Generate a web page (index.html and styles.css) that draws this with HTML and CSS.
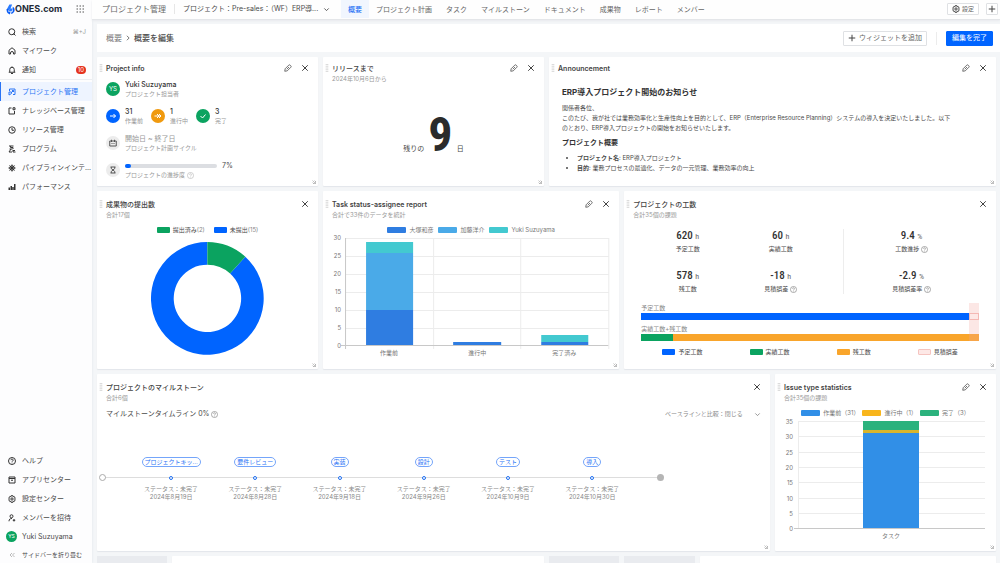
FILE: index.html
```html
<!DOCTYPE html>
<html lang="ja">
<head>
<meta charset="utf-8">
<title>プロジェクト管理 - 概要を編集</title>
<link rel="stylesheet" href="styles.css">
</head>
<body>
<svg class="sprite" aria-hidden="true">
  <symbol id="i-edit" viewBox="0 0 16 16"><path d="M1.500 14.500l.8-5L9.500 2.300a2 2 0 0 1 2.800 0l1.400 1.400a2 2 0 0 1 0 2.800L6.500 13.700zM5.500 10.500l4.500-4.500"/></symbol>
  <symbol id="i-close" viewBox="0 0 16 16"><path d="M2.500 2.500l11 11M13.500 2.500l-11 11"/></symbol>
  <symbol id="i-drag" viewBox="0 0 6 14"><path d="M1 1h1M4 1h1M1 4h1M4 4h1M1 7h1M4 7h1M1 10h1M4 10h1M1 13h1M4 13h1"/></symbol>
  <symbol id="i-resize" viewBox="0 0 8 8"><path d="M1 1l6 6M7 2v5H2M5 1l2 2M1 5l2 2"/></symbol>
  <symbol id="i-help" viewBox="0 0 16 16"><circle cx="8" cy="8" r="7"/><path d="M5.800 6.300a2.200 2.200 0 1 1 3.200 2c-.7.400-1 .8-1 1.500M8 11.300v1.200"/></symbol>
  <symbol id="i-down" viewBox="0 0 16 16"><path d="M3 5.500l5 5 5-5"/></symbol>
  <symbol id="i-plus" viewBox="0 0 16 16"><path d="M8 1.500v13M1.500 8h13"/></symbol>
  <symbol id="i-gear" viewBox="0 0 16 16"><path d="M6 1.500h4l.5 1.900 1.900-.5 2 3.400L13 8l1.400 1.700-2 3.400-1.900-.5-.5 1.900H6l-.5-1.900-1.900.5-2-3.400L3 8 1.600 6.300l2-3.400 1.900.5z"/><circle cx="8" cy="8" r="2.300"/></symbol>
</svg>
<div class="app">
  <aside class="sidebar">
    <div class="brand">
      <svg class="brand-mark" viewBox="0 0 16 20"><path d="M6 1h5L8 8h4l-2 5H5l1-3H1z" fill="#2a7bff"/><path d="M1 9h4l-1 5h4l-1 5C3 18 0 14 1 9zM12 5c4 2 5 8 1 11-1 1-2 2-4 2l1-4h2z" fill="#0a5cf5"/></svg>
      <span class="brand-name">ONES.com</span>
      <button class="apps" aria-label="アプリ一覧"><svg class="ico" viewBox="0 0 16 16"><path class="dots" d="M1 2h3M7 2h3M13 2h3M1 8h3M7 8h3M13 8h3M1 14h3M7 14h3M13 14h3"/></svg></button>
    </div>
    <nav class="menu">
      <a href="#" class="item"><svg class="ico" viewBox="0 0 16 16"><circle cx="7.500" cy="7.500" r="6"/><path d="M11 11l4 4"/></svg><span>検索</span><kbd>⌘+J</kbd></a>
      <a href="#" class="item"><svg class="ico" viewBox="0 0 16 16"><path d="M2 14V6.500L8 1.500l6 5V14h-3v-2a3 3 0 0 0-6 0v2z"/></svg><span>マイワーク</span></a>
      <a href="#" class="item"><svg class="ico" viewBox="0 0 16 16"><path d="M1.500 12.500h13M3.500 12V7a4.500 4.500 0 0 1 9 0v5M6 15h4M8 2.500V1"/></svg><span>通知</span><b class="badge">10</b></a>
    </nav>
    <nav class="menu menu-main">
      <a href="#" class="item active"><svg class="ico" viewBox="0 0 16 16"><path d="M3 6V2h11v11h-4M2 8h5v3l-5 3zM7 9l4-4M8 5h3v3"/></svg><span>プロジェクト管理</span></a>
      <a href="#" class="item"><svg class="ico" viewBox="0 0 16 16"><path d="M7 2H2v12h11V8M10 1.500h4v4h-4z"/></svg><span>ナレッジベース管理</span></a>
      <a href="#" class="item"><svg class="ico" viewBox="0 0 16 16"><circle cx="8" cy="8" r="6.500"/><path d="M8 4v4.500h4"/></svg><span>リソース管理</span></a>
      <a href="#" class="item"><svg class="ico" viewBox="0 0 16 16"><path d="M2 2h9M5 2v3h5v3M3 8h6M6 8l-4 6h6M10 10v4h5M10 11h4"/></svg><span>プログラム</span></a>
      <a href="#" class="item"><svg class="ico" viewBox="0 0 16 16"><circle cx="8" cy="8" r="4.500"/><circle cx="8" cy="8" r="1"/><path d="M8 1v14M1 8h14M3 3l10 10M13 3L3 13"/></svg><span>パイプラインインテ...</span></a>
      <a href="#" class="item"><svg class="ico" viewBox="0 0 16 16"><path class="bars" d="M2.500 14V9M6.500 14V6M10 14V8M13.500 14V2"/></svg><span>パフォーマンス</span></a>
    </nav>
    <nav class="menu menu-foot">
      <a href="#" class="item"><svg class="ico"><use href="#i-help"/></svg><span>ヘルプ</span></a>
      <a href="#" class="item"><svg class="ico" viewBox="0 0 16 16"><path d="M2 2h12v12H2zM2 5h12M6 8l2 1 2-1"/></svg><span>アプリセンター</span></a>
      <a href="#" class="item"><svg class="ico"><use href="#i-gear"/></svg><span>設定センター</span></a>
      <a href="#" class="item"><svg class="ico" viewBox="0 0 16 16"><circle cx="7" cy="4.500" r="3"/><path d="M2 14.500c0-4 2-5.500 6-5.500M12 10v5M9.500 12.500h5"/></svg><span>メンバーを招待</span></a>
      <a href="#" class="item"><i class="avatar small">YS</i><span>Yuki Suzuyama</span></a>
      <button class="item fold"><svg class="ico thin" viewBox="0 0 16 16"><path d="M8 4L4 8l4 4M13 4L9 8l4 4"/></svg><span>サイドバーを折り畳む</span></button>
    </nav>
  </aside>

  <div class="main">
    <header class="topbar">
      <span class="product">プロジェクト管理</span>
      <label class="picker project"><select aria-label="プロジェクト"><option>プロジェクト：Pre-sales：（WF）ERP導...</option></select><svg class="ico"><use href="#i-down"/></svg></label>
      <nav class="tabs">
        <a href="#" class="tab current">概要</a><a href="#" class="tab">プロジェクト計画</a><a href="#" class="tab">タスク</a><a href="#" class="tab">マイルストーン</a><a href="#" class="tab">ドキュメント</a><a href="#" class="tab">成果物</a><a href="#" class="tab">レポート</a><a href="#" class="tab">メンバー</a>
      </nav>
      <button class="btn compact"><svg class="ico"><use href="#i-gear"/></svg>設定</button>
      <button class="btn compact square" aria-label="追加"><svg class="ico"><use href="#i-plus"/></svg></button>
    </header>

    <div class="subbar">
      <a href="#" class="crumb">概要</a>
      <svg class="crumb-sep" viewBox="0 0 8 8"><path d="M2.500 1l3 3-3 3"/></svg>
      <h1>概要を編集</h1>
      <button class="btn"><svg class="ico"><use href="#i-plus"/></svg>ウィジェットを追加</button>
      <span class="divider"></span>
      <button class="btn primary">編集を完了</button>
    </div>

    <main class="board">
      <section class="card c3 tight">
        <header class="head"><svg class="drag"><use href="#i-drag"/></svg><h2 lang="en">Project info</h2><button aria-label="編集"><svg class="ico pen"><use href="#i-edit"/></svg></button><button aria-label="閉じる"><svg class="ico"><use href="#i-close"/></svg></button></header>
        <div class="info">
          <div class="pair"><i class="avatar">YS</i><div><p class="strong">Yuki Suzuyama</p><p class="note">プロジェクト担当者</p></div></div>
          <div class="stats">
            <div class="pair"><i class="disc blue"><svg class="ico" viewBox="0 0 16 16"><path d="M2 8h11M9 4l4 4-4 4"/></svg></i><div><p class="strong">31</p><p class="note">作業前</p></div></div>
            <div class="pair"><i class="disc orange"><svg class="ico" viewBox="0 0 16 16"><path d="M1 8h13M6 4l4 4-4 4M10 4l4 4-4 4"/></svg></i><div><p class="strong">1</p><p class="note">進行中</p></div></div>
            <div class="pair"><i class="disc green"><svg class="ico" viewBox="0 0 16 16"><path d="M3 8l4 4 6-7"/></svg></i><div><p class="strong">3</p><p class="note">完了</p></div></div>
          </div>
          <div class="pair"><i class="disc gray"><svg class="ico" viewBox="0 0 16 16"><path d="M1.500 4h13v10h-13zM5 1.500V6M11 1.500V6M5 9h2M9 9h2"/></svg></i><div><p class="faded">開始日 ~ 終了日</p><p class="note">プロジェクト計画サイクル</p></div></div>
          <div class="pair"><i class="disc gray"><svg class="ico" viewBox="0 0 16 16"><path d="M3 2h10M3 14h10M4.500 2v3L8 8l3.500-3V2M4.500 14v-3L8 8l3.500 3v3"/></svg></i><div><p class="meter"><progress value="7" max="100" aria-label="プロジェクトの進捗度"></progress><span>7%</span></p><p class="note">プロジェクトの進捗度 <svg class="q"><use href="#i-help"/></svg></p></div></div>
        </div>
        <svg class="resize"><use href="#i-resize"/></svg>
      </section>

      <section class="card c3 tight">
        <header class="head"><svg class="drag"><use href="#i-drag"/></svg><h2>リリースまで<small>2024年10月6日から</small></h2><button aria-label="編集"><svg class="ico pen"><use href="#i-edit"/></svg></button><button aria-label="閉じる"><svg class="ico"><use href="#i-close"/></svg></button></header>
        <p class="countdown">残りの<b>9</b>日</p>
        <svg class="resize"><use href="#i-resize"/></svg>
      </section>

      <section class="card c6 tight">
        <header class="head"><svg class="drag"><use href="#i-drag"/></svg><h2 lang="en">Announcement</h2><button aria-label="編集"><svg class="ico pen"><use href="#i-edit"/></svg></button><button aria-label="閉じる"><svg class="ico"><use href="#i-close"/></svg></button></header>
        <div class="article">
          <h3>ERP導入プロジェクト開始のお知らせ</h3>
          <p>関係者各位、<br>このたび、我が社では業務効率化と生産性向上を目的として、ERP（Enterprise Resource Planning）システムの導入を決定いたしました。以下<br>のとおり、ERP導入プロジェクトの開始をお知らせいたします。</p>
          <h4>プロジェクト概要</h4>
          <ul><li><b>プロジェクト名</b>: ERP導入プロジェクト</li><li><b>目的</b>: 業務プロセスの最適化、データの一元管理、業務効率の向上</li></ul>
        </div>
        <svg class="resize"><use href="#i-resize"/></svg>
      </section>

      <section class="card c3">
        <header class="head"><svg class="drag"><use href="#i-drag"/></svg><h2>成果物の提出数<small>合計17個</small></h2><button aria-label="閉じる"><svg class="ico"><use href="#i-close"/></svg></button></header>
        <ul class="legend wide"><li><i class="sw green"></i><span>提出済み<em>(2)</em></span></li><li><i class="sw blue"></i><span>未提出<em>(15)</em></span></li></ul>
        <svg class="donut" viewBox="0 0 112 112" role="img" aria-label="提出済み2、未提出15">
          <path fill="#0064ff" d="M93.700 14.600A56 56 0 1 1 56 0V22.500A33.500 33.500 0 1 0 78.600 31.200z"/>
          <path fill="#0ba360" d="M56 0A56 56 0 0 1 93.700 14.600L78.600 31.200A33.500 33.500 0 0 0 56 22.500z"/>
        </svg>
        <svg class="resize"><use href="#i-resize"/></svg>
      </section>

      <section class="card c4">
        <header class="head"><svg class="drag"><use href="#i-drag"/></svg><h2 lang="en">Task status-assignee report<small lang="ja">合計で33件のデータを統計</small></h2><button aria-label="編集"><svg class="ico pen"><use href="#i-edit"/></svg></button><button aria-label="閉じる"><svg class="ico"><use href="#i-close"/></svg></button></header>
        <ul class="legend soft"><li><i class="sw long royal"></i>大塚和彦</li><li><i class="sw long sky"></i>加藤洋介</li><li><i class="sw long teal"></i>Yuki Suzuyama</li></ul>
        <svg class="chart" viewBox="0 0 296 126" role="img" aria-label="担当者別のタスク状況">
          <path class="grid" d="M23 4.500H285M23 22.500H285M23 40.500H285M23 58.500H285M23 76.500H285M23 94.500H285M110.500 4V115M197.500 4V115M285.500 4V115"/>
          <path class="axis" d="M22.500 4V115M18 111.500H285"/>
          <path fill="#2f7de1" d="M43 76h47v35H43zM130 108h48v3h-48zM218 108h47v3h-47z"/>
          <path fill="#4aaae8" d="M43 19h47v57H43z"/>
          <path fill="#43c9d0" d="M43 8h47v11H43zM218 101h47v7h-47z"/>
          <g class="ticks"><text x="18" y="6">30</text><text x="18" y="24">25</text><text x="18" y="42">20</text><text x="18" y="60">15</text><text x="18" y="78">10</text><text x="18" y="96">5</text><text x="18" y="114">0</text></g>
          <g class="names"><text x="66" y="121">作業前</text><text x="154" y="121">進行中</text><text x="241" y="121">完了済み</text></g>
        </svg>
        <svg class="resize"><use href="#i-resize"/></svg>
      </section>

      <section class="card c5">
        <header class="head"><svg class="drag"><use href="#i-drag"/></svg><h2>プロジェクトの工数<small>合計35個の課題</small></h2><button aria-label="閉じる"><svg class="ico"><use href="#i-close"/></svg></button></header>
        <div class="effort">
          <div class="kpis">
            <dl><dd>620 <small>h</small></dd><dt>予定工数</dt></dl>
            <dl><dd>60 <small>h</small></dd><dt>実績工数</dt></dl>
            <dl><dd>578 <small>h</small></dd><dt>残工数</dt></dl>
            <dl><dd>-18 <small>h</small></dd><dt>見積誤差 <svg class="q"><use href="#i-help"/></svg></dt></dl>
          </div>
          <div class="kpis rates">
            <dl><dd>9.4 <small>%</small></dd><dt>工数進捗 <svg class="q"><use href="#i-help"/></svg></dt></dl>
            <dl><dd>-2.9 <small>%</small></dd><dt>見積誤差率 <svg class="q"><use href="#i-help"/></svg></dt></dl>
          </div>
        </div>
        <div class="compare">
          <p>予定工数</p>
          <div class="track"><i class="blue" style="width:97.1%"></i><i class="gap-box"></i></div>
          <p>実績工数+残工数</p>
          <div class="track"><i class="green" style="width:9.4%"></i><i class="amber"></i></div>
          <span class="band"></span>
        </div>
        <ul class="legend spread"><li><i class="sw blue"></i>予定工数</li><li><i class="sw green"></i>実績工数</li><li><i class="sw amber"></i>残工数</li><li><i class="sw pink"></i>見積誤差</li></ul>
        <svg class="resize"><use href="#i-resize"/></svg>
      </section>

      <section class="card c9">
        <header class="head"><svg class="drag"><use href="#i-drag"/></svg><h2>プロジェクトのマイルストーン<small>合計6個</small></h2><button aria-label="閉じる"><svg class="ico"><use href="#i-close"/></svg></button></header>
        <div class="line-head">
          <p>マイルストーンタイムライン 0% <svg class="q"><use href="#i-help"/></svg></p>
          <label class="picker"><select aria-label="ベースラインと比較"><option>ベースラインと比較：閉じる</option></select><svg class="ico"><use href="#i-down"/></svg></label>
        </div>
        <ol class="timeline">
          <li><a href="#">プロジェクトキッ...</a><i></i><p>ステータス：未完了<br>2024年8月19日</p></li>
          <li><a href="#">要件レビュー</a><i></i><p>ステータス：未完了<br>2024年8月28日</p></li>
          <li><a href="#">実装</a><i></i><p>ステータス：未完了<br>2024年9月18日</p></li>
          <li><a href="#">設計</a><i></i><p>ステータス：未完了<br>2024年9月26日</p></li>
          <li><a href="#">テスト</a><i></i><p>ステータス：未完了<br>2024年10月9日</p></li>
          <li><a href="#">導入</a><i></i><p>ステータス：未完了<br>2024年10月30日</p></li>
        </ol>
        <svg class="resize"><use href="#i-resize"/></svg>
      </section>

      <section class="card c3">
        <header class="head"><svg class="drag"><use href="#i-drag"/></svg><h2 lang="en">Issue type statistics<small lang="ja">合計35個の課題</small></h2><button aria-label="編集"><svg class="ico pen"><use href="#i-edit"/></svg></button><button aria-label="閉じる"><svg class="ico"><use href="#i-close"/></svg></button></header>
        <ul class="legend soft close-set"><li><i class="sw long azure"></i>作業前（31）</li><li><i class="sw long yellow"></i>進行中（1）</li><li><i class="sw long mint"></i>完了（3）</li></ul>
        <svg class="chart" viewBox="0 0 221 126" role="img" aria-label="課題タイプ別の件数">
          <path class="grid" d="M23 4.500H210M23 19.500H210M23 35.500H210M23 50.500H210M23 65.500H210M23 81.500H210M23 96.500H210M23.500 4V112"/>
          <path class="axis" d="M19 111.500H210"/>
          <path fill="#318fe7" d="M88 16h56v95H88z"/><path fill="#d9b52c" d="M88 13h56v3H88z"/><path fill="#2bb27d" d="M88 4h56v9H88z"/>
          <g class="ticks"><text x="18" y="7">35</text><text x="18" y="22">30</text><text x="18" y="38">25</text><text x="18" y="53">20</text><text x="18" y="68">15</text><text x="18" y="84">10</text><text x="18" y="99">5</text><text x="18" y="114">0</text></g>
          <g class="names"><text x="116" y="121">タスク</text></g>
        </svg>
        <svg class="resize"><use href="#i-resize"/></svg>
      </section>

      <div class="stub"></div><div class="card c5"></div><div class="stub"></div><div class="stub"></div><div class="card c4"></div>
    </main>
  </div>
</div>
</body>
</html>
```
FILE: styles.css
```css
* { box-sizing: border-box; margin: 0; padding: 0; }
body { font: 7px/10px Inter, "Noto Sans CJK JP", sans-serif; color: #4a4a4a; background: #f4f6f8; }
button, select { font: inherit; color: inherit; background: none; border: 0; }
button { cursor: pointer; }
a { color: inherit; text-decoration: none; }
ul, ol { list-style: none; }
i, em { font-style: normal; }
svg { fill: none; stroke: currentColor; stroke-width: 2; flex: none; }
.sprite { display: none; }
.ico { width: 8px; height: 8px; display: block; }
.q { width: 7px; height: 7px; stroke-width: 1; vertical-align: middle; }

.app { display: flex; height: 100vh; overflow: hidden; }

.sidebar { width: 92px; flex: none; display: flex; flex-direction: column; background: #fdfdfe; box-shadow: 0 0 2px #dfe3e8; }
.brand { display: flex; align-items: center; height: 22px; padding: 0 8px 4px 6px; }
.brand-mark { width: 9px; height: 11px; stroke: none; }
.brand-name { font: 700 9px/10px Inter, sans-serif; color: #222a38; }
.apps { margin-left: auto; color: #555; }
.dots { stroke-width: 2; }
.bars { stroke-width: 3; }
.item { display: flex; align-items: center; gap: 6px; width: 100%; height: 19px; padding: 0 6px 0 8px; white-space: nowrap; text-align: left; }
.item > .ico { color: #333; }
.item kbd { margin-left: auto; font: 6px/8px Inter, "DejaVu Sans", sans-serif; color: #999; }
.badge { margin-left: auto; padding: 0 2px; border-radius: 4px; background: #e5331f; color: #fff; font: 6px/8px Inter, sans-serif; }
.menu-main { border-top: 1px solid #eceef1; padding-top: 2px; }
.item.active { background: #eef4ff; color: #2a74f5; box-shadow: inset 1px 0 #2a74f5; }
.item.active > .ico { color: #2a74f5; }
.menu-foot { margin-top: auto; }
.item.fold { height: 17px; font-size: 6px; }
.item > .thin { color: #777; stroke-width: 1; }
.avatar { display: grid; place-items: center; width: 14px; height: 14px; border-radius: 50%; background: #0ba360; color: #fff; font: 6px/14px Inter, sans-serif; flex: none; }
.avatar.small { width: 11px; height: 11px; margin-left: -2px; margin-right: -1px; font-size: 5px; line-height: 11px; }

.main { flex: 1; min-width: 0; display: flex; flex-direction: column; }
.topbar { display: flex; align-items: center; height: 20px; flex: none; padding: 0 2px 1px 10px; background: #fefefe; border-bottom: 1px solid #e4e6e9; box-shadow: 0 1px 2px #e8eaed; }
.product { font-size: 8px; color: #6a6a6a; padding-right: 8px; border-right: 1px solid #e6e6e6; }
.picker { position: relative; display: flex; align-items: center; }
.picker select { appearance: none; padding-right: 17px; cursor: pointer; }
.picker .ico { position: absolute; right: 0; width: 7px; height: 7px; pointer-events: none; }
.project { margin: 0 11px 0 8px; }
.project select { padding-right: 11px; }
.tabs { display: flex; align-self: stretch; margin-right: auto; color: #666; }
.tab { padding: 0 7px; line-height: 19px; }
.tab.current { background: #f1f6fe; color: #2a74f5; font-weight: 500; }
.btn { display: flex; align-items: center; justify-content: center; gap: 3px; height: 15px; padding: 0 4px; border: 1px solid #dfe1e4; border-radius: 1px; background: #fff; color: #666; white-space: nowrap; }
.btn .ico { color: #444; }
.btn.compact { height: 12px; gap: 2px; font-size: 6px; }
.btn.square { width: 12px; padding: 0; margin-left: 7px; }
.btn.primary { background: #0064ff; border-color: #0064ff; color: #fff; padding: 0 5px; }
.divider { width: 1px; height: 13px; margin: 0 9px; background: #ececec; }

.subbar { display: flex; align-items: center; height: 28px; flex: none; margin: 4px 0 5px 5px; padding: 0 7px 0 9px; background: #fff; }
.crumb { font-size: 8px; color: #777; }
.crumb-sep { width: 6px; height: 6px; margin: 0 3px; stroke-width: 1; }
.subbar h1 { font-size: 8px; font-weight: 500; margin-right: auto; }

.board { display: grid; grid-template-columns: repeat(12, minmax(0, 1fr)); grid-template-rows: minmax(129px, auto) minmax(178px, auto) minmax(177px, auto) 40px; gap: 5px; padding: 0 4px 0 5px; }
.card { position: relative; background: #fff; border-radius: 1px; box-shadow: 0 1px 1px #e3e6ea; padding-top: 9px; min-width: 0; }
.card.tight { padding-top: 7px; }
.c3 { grid-column: span 3; }
.c4 { grid-column: span 4; }
.c5 { grid-column: span 5; }
.c6 { grid-column: span 6; }
.c9 { grid-column: span 9; }
.stub { background: #e9ebef; }
.head { display: flex; align-items: flex-start; padding: 0 8px 0 2px; gap: 7px; }
.head h2 { flex: 1; font-size: 7px; font-weight: 500; color: #444; margin-left: -4px; }
.head h2:lang(en) { font-weight: 600; }
.head h2 small { display: block; font-size: 6px; font-weight: 400; color: #999; }
.head button { width: 10px; height: 8px; display: grid; place-items: center; color: #444; }
.pen { stroke-width: 1.500; }
.drag { width: 4px; height: 8px; stroke-width: 1; color: #666; }
.resize { position: absolute; right: 2px; bottom: 2px; width: 4px; height: 4px; stroke-width: 1; color: #888; }

.info { display: flex; flex-direction: column; gap: 9px; padding: 6px 9px 0; line-height: 9px; }
.pair { display: flex; align-items: center; gap: 5px; }
.stats { display: grid; grid-template-columns: repeat(3, 40px); gap: 5px; }
.strong { color: #333; font-weight: 500; }
.note { font-size: 6px; color: #999; }
.faded { color: #999; }
.disc { display: grid; place-items: center; width: 14px; height: 14px; border-radius: 50%; color: #fff; flex: none; }
.disc.gray { background: #ececec; color: #555; }
.meter { display: flex; align-items: center; gap: 5px; }
.meter progress { appearance: none; width: 92px; height: 4px; border: 0; }
.meter progress::-webkit-progress-bar { background: #dcdee2; border-radius: 2px; }
.meter progress::-webkit-progress-value { background: #0064ff; border-radius: 2px; }
.blue { background: #0064ff; }
.green { background: #0ba360; }
.orange { background: #f09a0f; }
.amber { background: #f9a52b; }
.pink { background: #fde8e6; border: 1px solid #f5c4c0; }
.royal { background: #2f7de1; }
.sky { background: #4aaae8; }
.teal { background: #43c9d0; }
.azure { background: #318fe7; }
.yellow { background: #f8b51c; }
.mint { background: #2bb27d; }

.countdown { display: flex; justify-content: center; align-items: baseline; gap: 4px; margin-top: 27px; }
.countdown b { font: 700 48px/48px "Roboto Condensed", "Liberation Sans Narrow", Roboto, sans-serif; color: #2b2b2b; }

.article { padding: 12px 10px 0 13px; font-size: 6px; }
.article h3 { font-size: 8px; line-height: 12px; color: #333; margin-bottom: 5px; }
.article h4 { font-size: 7px; color: #333; margin: 5px 0; }
.article ul { list-style: disc; padding-left: 15px; }

.legend { display: flex; justify-content: center; gap: 5px; margin-top: 6px; font-size: 6px; line-height: 8px; white-space: nowrap; }
.legend li { display: flex; align-items: center; gap: 3px; }
.legend em { color: #888; }
.legend.soft { color: #777; }
.legend.wide { gap: 9px; }
.legend.close-set { gap: 3px; }
.legend.spread { justify-content: space-around; margin: 7px 17px 0; }
.sw { width: 13px; height: 6px; border-radius: 1px; }
.sw.long { width: 19px; }
.donut { display: block; width: 51%; margin: 8px auto 0; stroke: none; }
.chart { display: block; width: 100%; stroke: none; }
.grid { stroke: #ececec; stroke-width: 1; }
.axis { stroke: #c8c8c8; stroke-width: 1; }
.ticks, .names { fill: #777; font-size: 6px; text-anchor: end; }
.names { text-anchor: middle; }

.effort { display: grid; grid-template-columns: 186fr 136fr; gap: 16px; padding: 9px 17px 0; }
.kpis { display: grid; grid-template-columns: 1fr 1fr; gap: 15px 0; text-align: center; }
.rates { grid-template-columns: 1fr; border-left: 1px solid #ededed; }
.kpis dd { font: 500 11px/14px "Roboto Condensed", "Liberation Sans Narrow", Roboto, sans-serif; color: #333; }
.kpis dd small { font-size: 8px; font-weight: 400; color: #666; }
.kpis dt { font-size: 6px; line-height: 10px; }
.compare { position: relative; margin: 9px 17px 0; font-size: 6px; line-height: 10px; color: #888; }
.compare p + .track { margin-bottom: 4px; }
.track { display: flex; height: 7px; }
.track i:last-child { flex: 1; }
.gap-box { border: 1px solid #f5b8b4; background: #fde8e6; position: relative; z-index: 1; }
.band { position: absolute; top: 0; right: 0; bottom: 0; width: 3%; background: #f5a49d44; }

.line-head { display: flex; justify-content: space-between; padding: 6px 9px 0; }
.line-head .picker { color: #888; font-size: 6px; }
.timeline { position: relative; display: grid; grid-template-columns: repeat(6, 1fr); width: 84%; margin: 38px 0 0 2px; padding: 0 30px; font-size: 6px; line-height: 8px; text-align: center; color: #888; white-space: nowrap; }
.timeline::before { content: ""; position: absolute; left: 6px; right: 6px; top: 20px; height: 1px; background: #ddd; }
.timeline::after { content: ""; position: absolute; right: 0; top: 17px; width: 7px; height: 7px; border-radius: 50%; background: #b5b5b5; }
.timeline li { display: flex; flex-direction: column; align-items: center; }
.timeline li:first-child::before { content: ""; position: absolute; left: 0; top: 17px; width: 7px; height: 7px; box-sizing: border-box; border-radius: 50%; border: 1px solid #aaa; background: #fff; }
.timeline a { padding: 0 2px; border: 1px solid #74a5fa; border-radius: 5px; color: #2a74f5; }
.timeline i { position: relative; width: 4px; height: 4px; margin: 9px 0 5px; border: 1px solid #1f6ff0; border-radius: 50%; background: #fff; }
```
